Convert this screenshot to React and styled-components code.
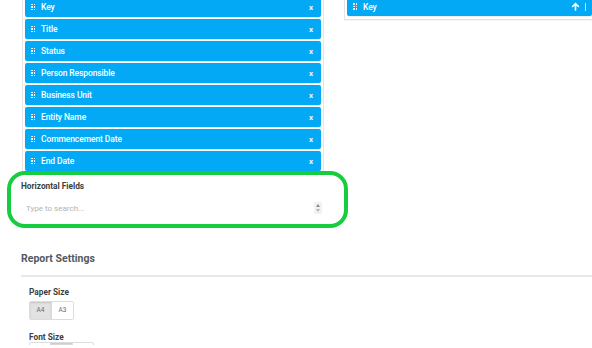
import React from "react";
import styled, { createGlobalStyle } from "styled-components";

const Global = createGlobalStyle`
  html, body { margin: 0; padding: 0; background: #fff; }
  body { font-family: Roboto, "Liberation Sans", Arial, sans-serif; overflow: hidden; }
`;

const Page = styled.div`
  width: 592px;
  height: 348px;
  overflow: hidden;
  padding-left: 20px;
  box-sizing: border-box;
  margin-top: -3px;
`;

const TopRow = styled.div`
  display: flex;
  align-items: flex-start;
  gap: 19px;
`;

const LeftCol = styled.div`
  width: 305px;
  flex: none;
`;

const FieldList = styled.div`
  margin-left: 2px;
  width: 302px;
  box-sizing: border-box;
  border-left: 1px solid #e6e6e6;
  border-right: 1px solid #e6e6e6;
  padding: 0 2px 2px 2px;
  display: flex;
  flex-direction: column;
  gap: 2px;
`;

const FieldRow = styled.div`
  height: 20px;
  background: #03a9f4;
  border-radius: 2px;
  display: flex;
  align-items: center;
  padding: 0 8px 0 6px;
  color: #fff;
  font-size: 8.5px;
  font-weight: 500;
  box-shadow: 0 1px 1px rgba(0,0,0,0.08);
`;

const Grip = styled.span`
  display: grid;
  grid-template-columns: 1.5px 1.5px;
  grid-template-rows: repeat(3, 1.5px);
  gap: 1px 1px;
  margin-right: 6px;
  span { background: #e8f6fe; }
`;

const Label = styled.span`
  flex: 1;
  letter-spacing: -0.1px;
`;

const Remove = styled.span`
  font-size: 8px;
  font-weight: 700;
  color: #eaf7fe;
`;

const HSection = styled.div`
  position: relative;
  padding-top: 8px;
  height: 52px;
`;

const FieldTitle = styled.div`
  font-size: 8.3px;
  font-weight: 700;
  color: #3a3f44;
  margin-left: 1px;
`;

const SearchBox = styled.div`
  margin-top: 7px;
  height: 20px;
  display: flex;
  align-items: center;
  padding: 0 3px 0 6px;
`;

const Placeholder = styled.span`
  flex: 1;
  font-size: 8px;
  color: #b3b3b3;
`;

const Spinner = styled.span`
  display: flex;
  flex-direction: column;
  width: 8px;
  background: #f2f2f2;
  align-items: center;
  gap: 2px;
  padding: 2px 0;
`;

const Tri = styled.span`
  width: 0;
  height: 0;
  border-left: 2.5px solid transparent;
  border-right: 2.5px solid transparent;
  ${(p) => (p.$up ? "border-bottom: 3px solid #8a8a8a;" : "border-top: 3px solid #b5b5b5;")}
`;

const Highlight = styled.div`
  position: absolute;
  left: -13px;
  top: -2px;
  width: 341px;
  height: 57px;
  box-sizing: border-box;
  border: 4px solid #16cc3f;
  border-radius: 18px;
  pointer-events: none;
`;

const RightCol = styled.div`
  flex: 1;
  border: 1px solid #e3e3e3;
  border-right: none;
  border-top: none;
  padding: 0 0 3px 2px;
  box-shadow: 0 1px 1px rgba(0,0,0,0.04);
`;

const RightRow = styled(FieldRow)`
  height: 19px;
  padding-right: 0;
`;

const Arrow = styled.svg`
  width: 9px;
  height: 9px;
  margin-right: 5px;
`;

const Divider = styled.span`
  width: 1px;
  height: 8px;
  background: #bfe9fc;
  margin-right: 6px;
`;

const Settings = styled.div`
  margin-top: 19px;
`;

const SettingsTitle = styled.div`
  font-size: 10.5px;
  font-weight: 700;
  color: #555a5f;
  margin-left: 1px;
  padding-bottom: 10px;
  border-bottom: 2px solid #e8e8e8;
`;

const SettingsBody = styled.div`
  padding: 10px 0 0 9px;
`;

const SubTitle = styled.div`
  font-size: 8.3px;
  line-height: 10px;
  font-weight: 700;
  color: #3a3f44;
  margin-bottom: 0;
`;

const BtnGroup = styled.div`
  display: inline-flex;
  border: 1px solid #dcdcdc;
  border-radius: 2px;
  margin-bottom: 12px;
  overflow: hidden;
`;

const Btn = styled.span`
  width: ${(p) => p.$w || 21}px;
  height: 17px;
  display: flex;
  align-items: center;
  justify-content: center;
  font-size: 6.5px;
  color: #6a6a6a;
  background: ${(p) => (p.$active ? "#e2e2e2" : "#fff")};
  box-shadow: ${(p) => (p.$active ? "inset 0 1px 2px rgba(0,0,0,0.12)" : "none")};
  & + & { border-left: 1px solid #dcdcdc; }
`;

const fields = [
  "Key",
  "Title",
  "Status",
  "Person Responsible",
  "Business Unit",
  "Entity Name",
  "Commencement Date",
  "End Date",
];

const GripIcon = () => (
  <Grip>
    {Array.from({ length: 6 }).map((_, i) => (
      <span key={i} />
    ))}
  </Grip>
);

export default function App() {
  return (
    <>
      <Global />
      <Page>
        <TopRow>
          <LeftCol>
            <FieldList>
              {fields.map((f) => (
                <FieldRow key={f}>
                  <GripIcon />
                  <Label>{f}</Label>
                  <Remove>x</Remove>
                </FieldRow>
              ))}
            </FieldList>
            <HSection>
              <Highlight />
              <FieldTitle>Horizontal Fields</FieldTitle>
              <SearchBox>
                <Placeholder>Type to search...</Placeholder>
                <Spinner>
                  <Tri $up />
                  <Tri />
                </Spinner>
              </SearchBox>
            </HSection>
          </LeftCol>
          <RightCol>
            <RightRow>
              <GripIcon />
              <Label>Key</Label>
              <Arrow viewBox="0 0 10 10">
                <path d="M5 9V2M1.8 5L5 1.6 8.2 5" stroke="#fff" strokeWidth="1.8" fill="none" strokeLinecap="round" strokeLinejoin="round" />
              </Arrow>
              <Divider />
            </RightRow>
          </RightCol>
        </TopRow>
        <Settings>
          <SettingsTitle>Report Settings</SettingsTitle>
          <SettingsBody>
            <SubTitle>Paper Size</SubTitle>
            <BtnGroup>
              <Btn $active>A4</Btn>
              <Btn>A3</Btn>
            </BtnGroup>
            <SubTitle>Font Size</SubTitle>
            <BtnGroup>
              <Btn $w={20} />
              <Btn $w={21} $active />
              <Btn $w={20} />
            </BtnGroup>
          </SettingsBody>
        </Settings>
      </Page>
    </>
  );
}
